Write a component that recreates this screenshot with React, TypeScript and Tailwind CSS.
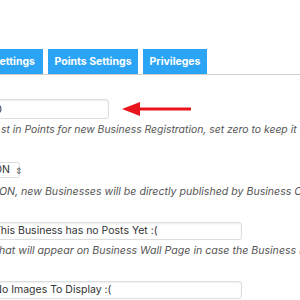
export default function App() {
  return (
    <div className="w-[300px] h-[300px] overflow-hidden bg-white font-['Inter',sans-serif] text-[#333]">
      {/* tabs */}
      <div className="mt-[49px] flex gap-[5px] border-b border-[#cfcfcf] -ml-[20px]">
        <div className="h-[25px] w-[63px] bg-[#2ba4f5] text-white text-[10.5px] font-bold flex items-center justify-end pr-[8px]">
          Settings
        </div>
        <div className="h-[25px] w-[90px] bg-[#2ba4f5] text-white text-[10.5px] font-bold flex items-center justify-center">
          Points Settings
        </div>
        <div className="h-[25px] w-[64px] bg-[#2ba4f5] text-white text-[10.5px] font-bold flex items-center justify-center">
          Privileges
        </div>
      </div>

      <div className="flex flex-col -ml-[11px]">
        <div className="mt-[24px] flex items-center">
          <div className="h-[20px] w-[120px] border border-[#ddd] rounded-[3px] px-[6px] flex items-center text-[11px] shadow-[inset_0_1px_2px_rgba(0,0,0,0.07)]">
            <span className="-ml-[1px]">0</span>
          </div>
          <svg className="ml-[12px]" width="72" height="16" viewBox="0 0 72 16">
            <polygon points="1,8 19,1 19,15" fill="#e8161c" />
            <rect x="17" y="6.5" width="53" height="3" fill="#e8161c" />
          </svg>
        </div>
        <p className="ml-[12px] mt-[3px] text-[10.4px] italic text-[#555] whitespace-nowrap leading-[16px]">
          st in Points for new Business Registration, set zero to keep it
        </p>

        <div className="mt-[24px] h-[16px] w-[31px] border border-[#ddd] rounded-[3px] pl-[6px] flex items-center text-[10.5px] gap-[5px]">
          <span className="-ml-[2px]">ON</span>
          <span className="text-[9px] leading-none text-[#555]">⇕</span>
        </div>
        <p className="ml-[10px] mt-[6px] text-[10.6px] italic text-[#555] whitespace-nowrap leading-[16px]">
          ON, new Businesses will be directly published by Business Owner
        </p>

        <div className="mt-[22px] h-[18px] w-[253px] border border-[#ddd] rounded-[3px] px-[6px] flex items-center text-[10.5px] shadow-[inset_0_1px_2px_rgba(0,0,0,0.07)]">
          <span className="-ml-[2px]">This Business has no Posts Yet :(</span>
        </div>
        <p className="ml-[10px] mt-[3px] text-[10.6px] italic text-[#555] whitespace-nowrap leading-[16px]">
          hat will appear on Business Wall Page in case the Business has no Posts
        </p>

        <div className="mt-[22px] h-[18px] w-[253px] border border-[#ddd] rounded-[3px] px-[6px] flex items-center text-[10.5px] shadow-[inset_0_1px_2px_rgba(0,0,0,0.07)]">
          <span className="-ml-[2px]">No Images To Display :(</span>
        </div>
      </div>
    </div>
  );
}
